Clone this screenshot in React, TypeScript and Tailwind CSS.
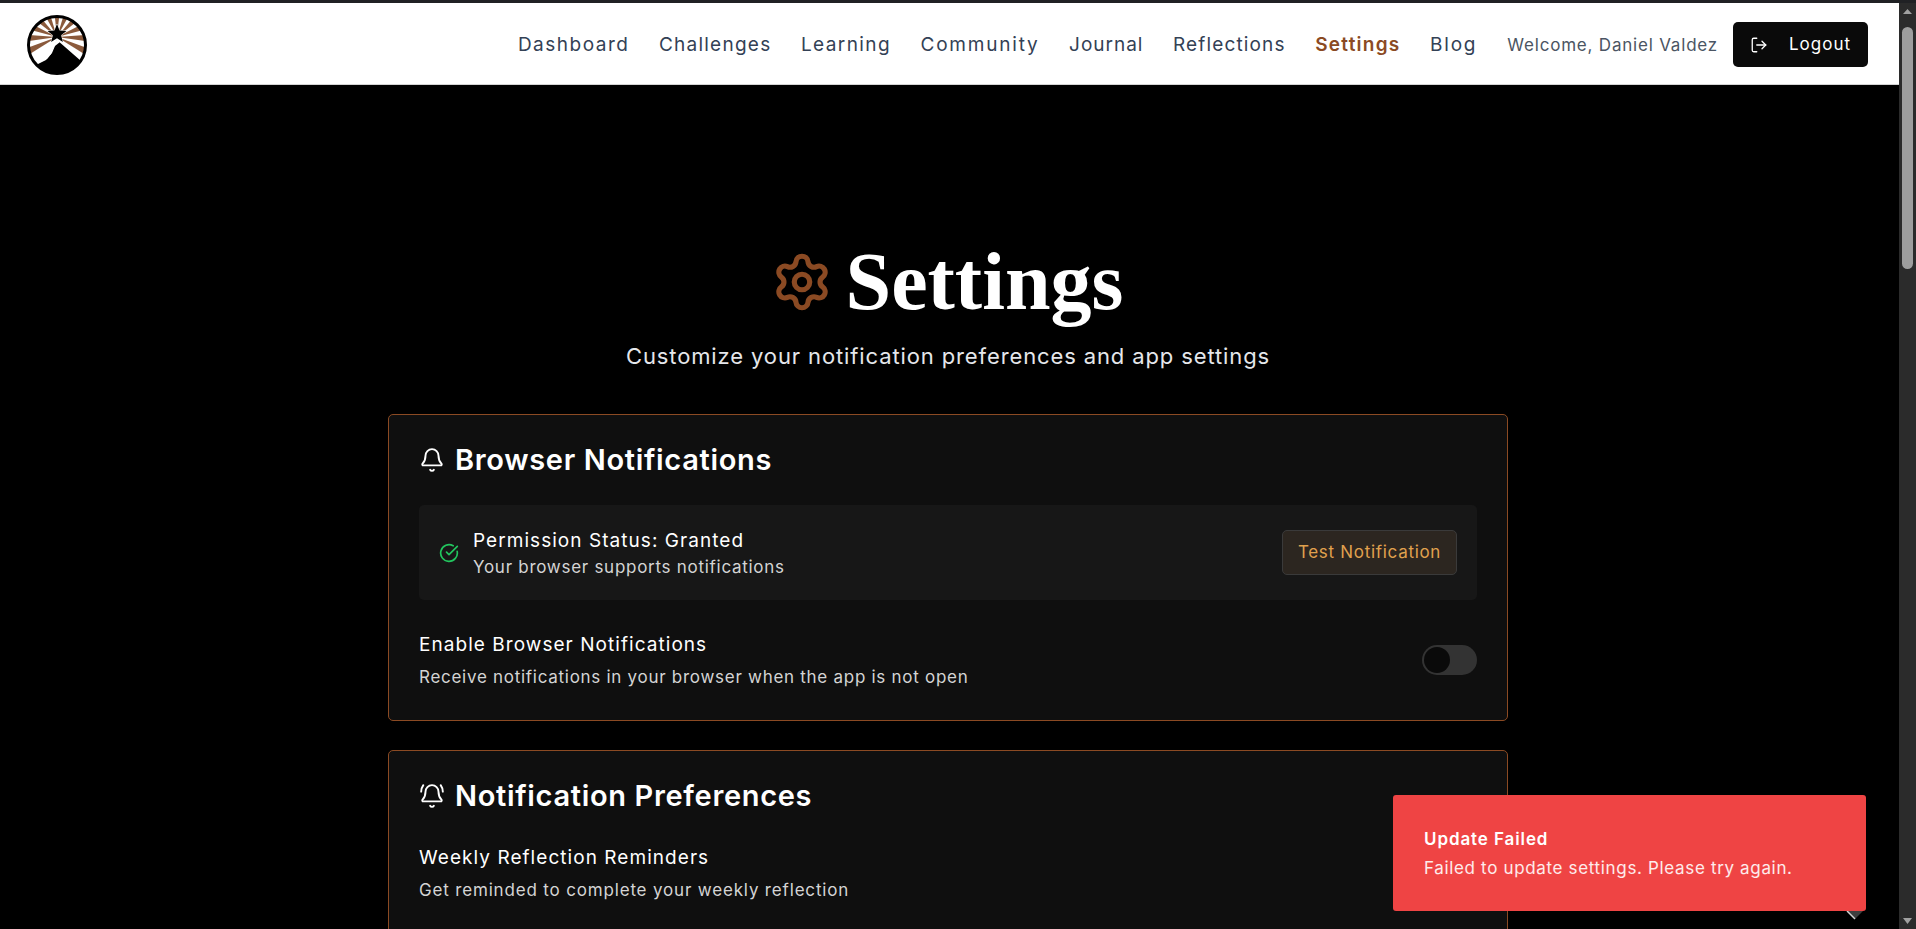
import { Settings, Bell, BellRing, CircleCheckBig, LogOut } from "lucide-react";

const sans = "font-['Inter','Open_Sans',sans-serif]";

function wedge(a0: number, a1: number) {
  const cx = 30;
  const cy = 22;
  const p = (a: number) => {
    const t = ((a - 90) * Math.PI) / 180;
    return `${(cx + 60 * Math.cos(t)).toFixed(2)} ${(cy + 60 * Math.sin(t)).toFixed(2)}`;
  };
  return `M${cx} ${cy}L${p(a0)}L${p(a1)}Z`;
}

function Logo() {
  const rays = [-116, -92, -69, -46, -23, 0, 23, 46, 69, 92, 116];
  return (
    <svg width="60" height="60" viewBox="0 0 60 60" className="block shrink-0">
      <defs>
        <clipPath id="logo-clip">
          <circle cx="30" cy="30" r="28" />
        </clipPath>
      </defs>
      <g clipPath="url(#logo-clip)">
        <rect width="60" height="60" fill="#fff" />
        {rays.map((a) => (
          <path key={a} d={wedge(a - 6, a + 6)} fill="#8b5a3c" />
        ))}
        <path d="M30 22 L2 44 L6 60 L54 60 L58 46 Z" fill="#fff" />
        <path d="M4 60 L9 50 L19 45 L24 39 L30 25 L54 46 L60 60 Z" fill="#000" />
        <path d="M10 49 L17 42 L22 41 L30 24 L33 27 L28 31 L25 38 L20 44 L14 45 Z" fill="#fff" />
        <path d="M30 9 L32.53 15.52 L39.5 15.9 L34.09 20.33 L35.9 27.1 L30 23.3 L24.1 27.1 L25.91 20.33 L20.5 15.9 L27.47 15.52 Z" fill="#000" stroke="#fff" strokeWidth="0.8" paintOrder="stroke" />
      </g>
      <circle cx="30" cy="30" r="28.5" fill="none" stroke="#000" strokeWidth="3" />
    </svg>
  );
}

function NavLink({ label, active, track }: { label: string; active?: boolean; track: string }) {
  return (
    <a className={`text-[19px] leading-7 whitespace-nowrap ${track} ${active ? "font-semibold text-[#8b4a23]" : "font-normal text-[#334155]"}`}>
      {label}
    </a>
  );
}

export default function App() {
  return (
    <div className={`h-[929px] overflow-hidden flex flex-col bg-black ${sans}`}>
      <div className="h-[3px] shrink-0 bg-[#202124]" />
      <div className="flex-1 min-h-0 flex">
        <div className="flex-1 min-w-0 flex flex-col overflow-hidden">
          <header className="h-[82px] shrink-0 bg-white border-b border-[#d4d4d4] flex items-center pl-[27px] pr-[31px] pt-[2px]">
            <Logo />
            <nav className="ml-auto flex items-center gap-[29.5px]">
              <NavLink label="Dashboard" track="tracking-[1.5px]" />
              <NavLink label="Challenges" track="tracking-[1.25px]" />
              <NavLink label="Learning" track="tracking-[1.4px]" />
              <NavLink label="Community" track="tracking-[1.8px]" />
              <NavLink label="Journal" track="tracking-[1px]" />
              <NavLink label="Reflections" track="tracking-[1.15px]" />
              <NavLink label="Settings" active track="tracking-[1.25px]" />
              <NavLink label="Blog" track="tracking-[1.8px]" />
            </nav>
            <span className="ml-[30px] text-[17px] leading-6 text-[#4b5563] whitespace-nowrap tracking-[0.8px]">Welcome, Daniel Valdez</span>
            <button className="ml-[15px] h-[45px] w-[135px] rounded-[5px] bg-[#0a0a0a] text-white flex items-center pl-[17px] text-[17px] tracking-[1px]">
              <LogOut className="w-[18px] h-[18px]" strokeWidth={1.75} />
              <span className="ml-[21px]">Logout</span>
            </button>
          </header>

          <main className="flex-1 flex flex-col items-center pt-[157px] pr-[3px]">
            <div className="flex items-center gap-[13px] h-[80px] mr-[2px]">
              <Settings className="w-[62px] h-[62px] text-[#8b4a23]" strokeWidth={2} />
              <h1 className="font-['Liberation_Serif',serif] font-bold text-[82px] leading-[80px] text-white">Settings</h1>
            </div>
            <p className="mt-[20px] text-[22px] leading-7 text-[#e5e7eb] tracking-[0.88px]">Customize your notification preferences and app settings</p>

            <section className="mt-[44px] w-[1120px] shrink-0 rounded-[5px] border border-[#8b4a23] bg-[#0f0f0f] px-[30px] pt-[24px] pb-[31px]">
              <h2 className="flex items-center gap-[10px] leading-[42px] font-semibold text-white">
                <Bell className="w-[26px] h-[26px]" strokeWidth={1.75} />
                <span className="text-[29px] tracking-[0.67px]">Browser Notifications</span>
              </h2>
              <div className="mt-[24px] h-[95px] rounded-[5px] bg-[#171717] flex items-center pl-[20px] pr-[20px]">
                <CircleCheckBig className="w-[20px] h-[20px] text-[#22c55e]" strokeWidth={2} />
                <div className="ml-[14px] flex-1">
                  <div className="text-[19px] leading-7 tracking-[1.05px] text-white">Permission Status: Granted</div>
                  <div className="text-[17px] leading-6 tracking-[0.72px] text-[#d4d4d4]">Your browser supports notifications</div>
                </div>
                <button className="h-[45px] w-[175px] rounded-[5px] border border-[#3a3a3a] bg-[#2c2620] text-[#e0a14e] text-[17px] tracking-[0.7px]">Test Notification</button>
              </div>
              <div className="mt-[31px] flex items-center justify-between">
                <div>
                  <div className="text-[19px] leading-7 tracking-[1.05px] text-white">Enable Browser Notifications</div>
                  <div className="mt-[6px] text-[17px] leading-6 tracking-[0.72px] text-[#d4d4d4]">Receive notifications in your browser when the app is not open</div>
                </div>
                <div className="h-[30px] w-[55px] rounded-full bg-[#333333] flex items-center pl-[2px]">
                  <div className="h-[26px] w-[26px] rounded-full bg-[#0a0a0a]" />
                </div>
              </div>
            </section>

            <section className="mt-[29px] w-[1120px] h-[400px] shrink-0 rounded-[5px] border border-[#8b4a23] bg-[#0f0f0f] px-[30px] pt-[24px] pb-[30px]">
              <h2 className="flex items-center gap-[10px] leading-[42px] font-semibold text-white">
                <BellRing className="w-[26px] h-[26px]" strokeWidth={1.75} />
                <span className="text-[29px] tracking-[0.67px]">Notification Preferences</span>
              </h2>
              <div className="mt-[27px] flex items-center justify-between">
                <div>
                  <div className="text-[19px] leading-7 tracking-[1.05px] text-white">Weekly Reflection Reminders</div>
                  <div className="mt-[6px] text-[17px] leading-6 tracking-[0.83px] text-[#d4d4d4]">Get reminded to complete your weekly reflection</div>
                </div>
                <div className="h-[30px] w-[55px] rounded-full bg-[#333333] flex items-center pl-[2px]">
                  <div className="h-[26px] w-[26px] rounded-full bg-[#0a0a0a]" />
                </div>
              </div>
            </section>
          </main>
        </div>

        <div className="w-[17px] shrink-0 bg-[#2b2b2b] flex flex-col items-center relative">
          <svg width="17" height="17" viewBox="0 0 17 17" className="shrink-0"><path d="M8.5 6 L13 11 L4 11 Z" fill="#a0a0a0" /></svg>
          <div className="w-[11px] h-[242px] rounded-full bg-[#9e9e9e] mt-[7px]" />
          <svg width="17" height="17" viewBox="0 0 17 17" className="absolute bottom-0 left-0"><path d="M8.5 12 L13 6 L4 6 Z" fill="#a0a0a0" /></svg>
        </div>
      </div>

      <svg width="18" height="9" viewBox="0 0 18 9" className="fixed left-[1846px] top-[911px]">
        <path d="M1 0 L9 8 L17 0 Z" fill="#3f3f3f" />
        <path d="M1 0 L9 8" stroke="#d4d4d4" strokeWidth="1.5" fill="none" />
      </svg>

      <div className="fixed left-[1393px] top-[795px] w-[473px] h-[116px] rounded-[3px] bg-[#ef4444] pl-[31px] pt-[32px] text-white">
        <div className="text-[17px] leading-6 font-semibold tracking-[0.9px]">Update Failed</div>
        <div className="mt-[5px] text-[17px] leading-6 tracking-[0.66px] text-white/90">Failed to update settings. Please try again.</div>
      </div>
    </div>
  );
}
